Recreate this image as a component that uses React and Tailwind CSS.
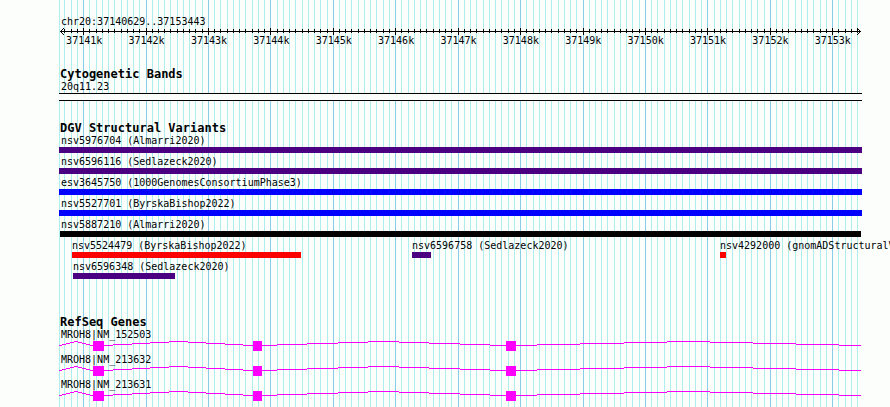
import React from "react";

const START = 37140629;
const END = 37153443;
const VIEW = 803;
const SCALE = 800 / (END - START + 1);

const toX = (bp) => 1 + (bp - START) * SCALE;

const ticks = [];
for (let bp = Math.ceil(START / 100) * 100; bp <= END; bp += 100) {
  const major = bp % 1000 === 0;
  ticks.push({ bp, major, x: Math.round(major ? toX(bp) : toX(bp) - 0.1) });
}

function Drawing({ height, children }) {
  return (
    <svg
      className="block w-full"
      viewBox={`0 0 ${VIEW} ${height}`}
      height={height}
      preserveAspectRatio="none"
      shapeRendering="crispEdges"
      aria-hidden="true"
    >
      {children}
    </svg>
  );
}

function Gridlines() {
  return (
    <svg
      className="absolute inset-0 h-full w-full"
      viewBox={`0 0 ${VIEW} 407`}
      preserveAspectRatio="none"
      shapeRendering="crispEdges"
      aria-hidden="true"
    >
      <rect x={0} y={0} width={1} height={407} fill="#afeeee" />
      {ticks.map((t) => (
        <rect key={t.bp} x={t.x} y={0} width={1} height={407} fill={t.major ? "#87ceeb" : "#afeeee"} />
      ))}
    </svg>
  );
}

function Ruler() {
  return (
    <section>
      <p className="pl-0.5">chr20:37140629..37153443</p>
      <Drawing height={7}>
        <rect x={1} y={3} width={801} height={1} />
        {ticks.map((t) => (
          <rect key={t.bp} x={t.x} y={t.major ? 0 : 1} width={1} height={t.major ? 7 : 4} />
        ))}
        {[1, 2, 3].map((d) => (
          <g key={d}>
            <rect x={1 + d} y={3 - d} width={1} height={1} />
            <rect x={1 + d} y={3 + d} width={1} height={1} />
            <rect x={801 - d} y={3 - d} width={1} height={1} />
            <rect x={801 - d} y={3 + d} width={1} height={1} />
          </g>
        ))}
      </Drawing>
      <div className="-mr-0.5 -ml-1.5 grid grid-cols-13 text-center">
        {ticks
          .filter((t) => t.major)
          .map((t) => (
            <span key={t.bp}>{t.bp / 1000}k</span>
          ))}
      </div>
    </section>
  );
}

function TrackTitle({ children }) {
  return <h2 className="pl-px text-[12px] leading-[14px] font-bold">{children}</h2>;
}

const wideVariants = [
  { name: "nsv5976704 (Almarri2020)", color: "bg-[#4b0082]" },
  { name: "nsv6596116 (Sedlazeck2020)", color: "bg-[#4b0082]" },
  { name: "esv3645750 (1000GenomesConsortiumPhase3)", color: "bg-[#0000ff]" },
  { name: "nsv5527701 (ByrskaBishop2022)", color: "bg-[#0000ff]" },
  { name: "nsv5887210 (Almarri2020)", color: "mx-px bg-black" },
];

const packedVariants = [
  [
    { name: "nsv5524479 (ByrskaBishop2022)", start: 13, end: 242, color: "bg-[#ff0000]" },
    { name: "nsv6596758 (Sedlazeck2020)", start: 353, end: 372, color: "bg-[#4b0082]" },
    { name: "nsv4292000 (gnomADStructuralV", start: 661, end: 667, color: "bg-[#ff0000]" },
  ],
  [{ name: "nsv6596348 (Sedlazeck2020)", start: 14, end: 116, color: "bg-[#4b0082]" }],
];

function PackedRow({ items }) {
  const edges = [0, ...items.map((i) => i.start), VIEW];
  const columns = edges.slice(1).map((e, i) => `minmax(0, ${e - edges[i]}fr)`).join(" ");
  return (
    <div className="grid" style={{ gridTemplateColumns: columns }}>
      <span />
      {items.map((item, i) => {
        const span = edges[i + 2] - item.start;
        return (
          <div key={item.name}>
            <p>{item.name}</p>
            <div
              className={`h-[6px] ${item.color}`}
              style={{ width: `${((item.end - item.start) / span) * 100}%` }}
            />
          </div>
        );
      })}
    </div>
  );
}

const exons = [
  [34, 45],
  [194, 203],
  [447, 457],
];

// Each list holds the x positions where an intron line steps up or down by a pixel.
const introns = [
  [0, 3, 7, 11, 15, 19, 23, 27, 31, 34],
  [45, 54, 73, 91, 110, 129, 147, 166, 184, 194],
  [203, 218, 248, 279, 309, 340, 370, 401, 431, 447],
  [457, 478, 521, 565, 608, 651, 694, 737, 780, 802],
];
const levels = [4, 3, 2, 1, 0, 1, 2, 3, 4];

function Gene({ name }) {
  return (
    <div>
      <p className="pl-0.5">{name}</p>
      <Drawing height={10}>
        <g fill="#ff00ff">
          {introns.map((stops) =>
            levels.map((y, i) => (
              <rect key={stops[i]} x={stops[i]} y={y} width={stops[i + 1] - stops[i]} height={1} />
            ))
          )}
          {exons.map(([a, b]) => (
            <rect key={a} x={a} y={0} width={b - a} height={10} />
          ))}
        </g>
      </Drawing>
    </div>
  );
}

export default function App() {
  return (
    <main className="min-h-screen overflow-hidden bg-[#fcfefc] pr-7 pl-[59px] font-['DejaVu_Sans_Mono',monospace] text-[10px] leading-[12px] whitespace-nowrap text-black">
      <div className="relative min-h-screen">
        <Gridlines />
        <div className="relative flex flex-col pt-4 pb-[6px]">
          <Ruler />
          <section className="mt-5">
            <TrackTitle>Cytogenetic Bands</TrackTitle>
            <p className="pl-0.5">20q11.23</p>
            <div className="h-2 border-y border-black bg-[#fcfefc]" />
          </section>
          <section className="mt-5">
            <TrackTitle>DGV Structural Variants</TrackTitle>
            <div className="flex flex-col gap-[3px]">
              {wideVariants.map((v) => (
                <div key={v.name}>
                  <p className="pl-0.5">{v.name}</p>
                  <div className={`h-[6px] ${v.color}`} />
                </div>
              ))}
              {packedVariants.map((items) => (
                <PackedRow key={items[0].name} items={items} />
              ))}
            </div>
          </section>
          <section className="mt-9">
            <TrackTitle>RefSeq Genes</TrackTitle>
            <div className="flex flex-col gap-[3px]">
              <Gene name="MROH8|NM_152503" />
              <Gene name="MROH8|NM_213632" />
              <Gene name="MROH8|NM_213631" />
            </div>
          </section>
        </div>
      </div>
    </main>
  );
}
